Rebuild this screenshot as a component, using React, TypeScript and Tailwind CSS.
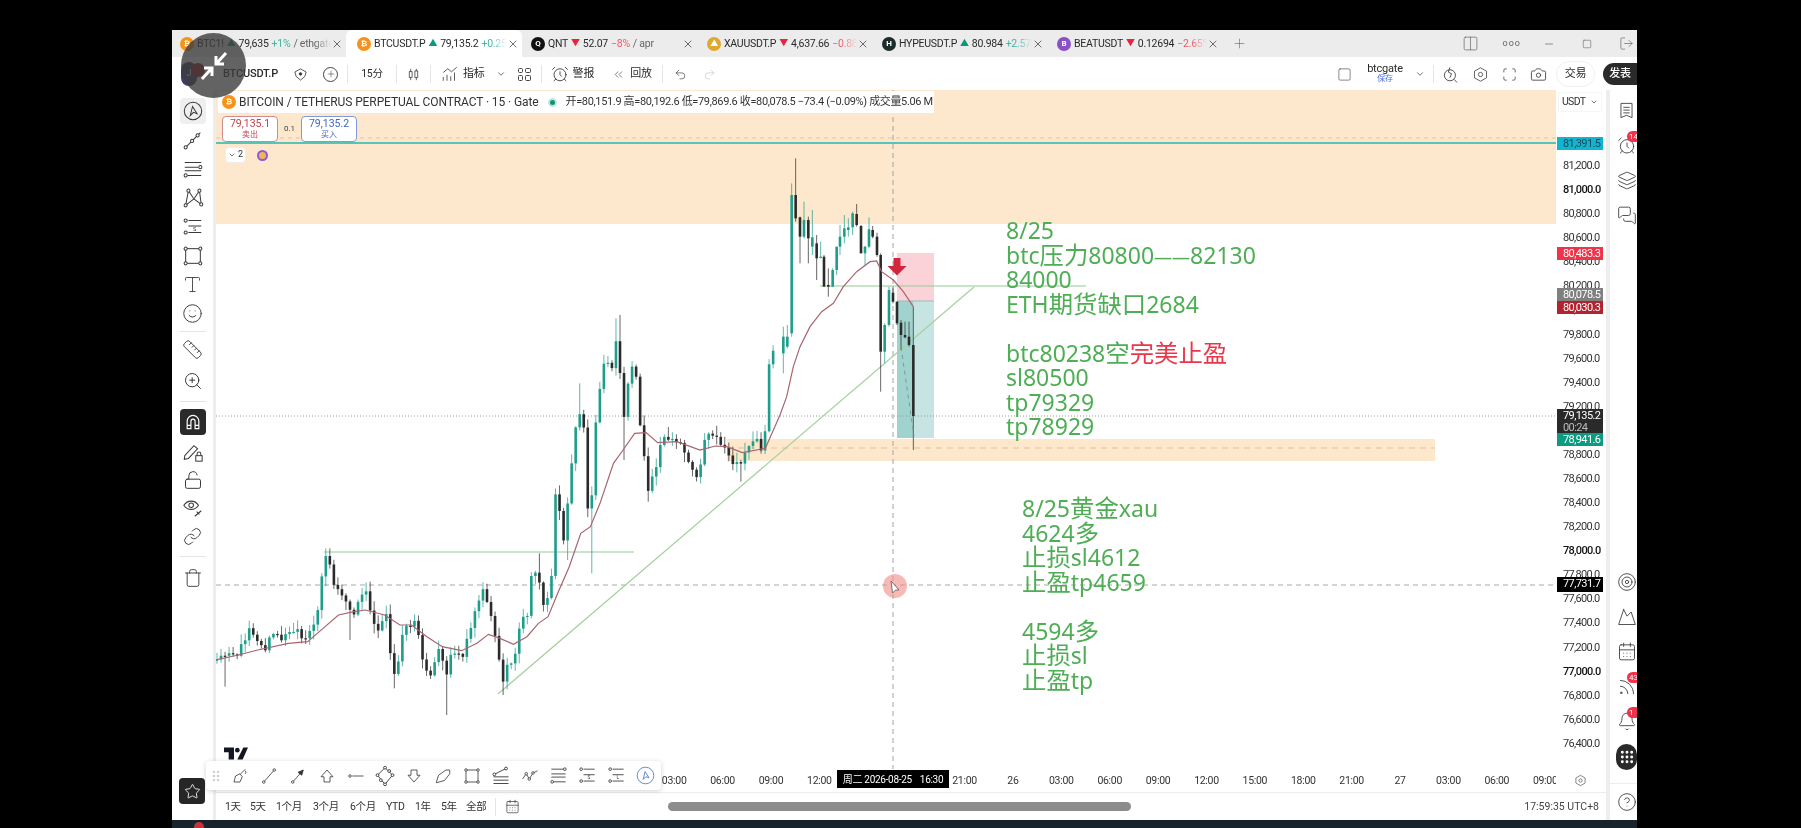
import React from "react";
import { X, Plus, Minus, Smile, ZoomIn, Ruler, LockOpen, Link, Trash, Type, Layers, AlarmClock, MessagesSquare, Mountain, CalendarDays, Rss, Bell, Grip, CircleHelp, Star, Target, ChevronDown, Undo2, Redo2, Camera, Square, LogOut, Columns2, ChevronsLeft } from "lucide-react";

const rnd = (n: number) => { const s = Math.sin(n * 12.9898 + 4.1) * 43758.5453; return s - Math.floor(s); };

const K8: number[][] = [[45,1080],[60,1065],[80,1050],[95,1075],[130,975],[150,1030],[170,1050],[185,1000],[210,1015],[250,990],[270,1030],[295,980],[310,900],[322,770],[332,760],[345,850],[370,885],[395,950],[430,865],[450,960],[470,1000],[480,880],[490,1040],[510,1150],[522,1000],[560,960],[575,1060],[600,1135],[620,1050],[640,1120],[655,1050],[680,1075],[700,990],[735,860],[750,920],[770,1015],[785,1160],[800,1080],[815,1105],[830,980],[855,930],[860,820],[880,830],[895,930],[915,820],[925,565],[945,720],[965,510],[980,350],[992,330],[1000,400],[1010,680],[1020,560],[1030,340],[1045,210],[1060,180],[1072,215],[1085,90],[1100,370],[1115,235],[1130,170],[1145,390],[1165,570],[1185,500],[1200,410],[1225,425],[1250,430],[1270,480],[1285,530],[1300,520],[1305,420],[1330,400],[1360,430],[1380,490],[1405,500],[1420,450],[1450,410],[1465,480],[1475,280],[1482,145],[1495,170],[1510,110],[1525,160],[1540,100]];
const pts = K8.map(([x, y]) => [200 + x / 2.6, 300 + y / 3]);
const interp = (x: number) => {
  for (let i = 1; i < pts.length; i++) {
    if (x <= pts[i][0]) {
      const [a, b] = pts[i - 1]; const [c, d] = pts[i];
      return b + ((x - a) / (c - a)) * (d - b);
    }
  }
  return pts[pts.length - 1][1];
};
type C = { x: number; o: number; c: number; h: number; l: number };
const specials: number[][] = [[68,0,1160],[330,745,0],[395,0,1020],[510,0,1165],[637,0,1245],[785,0,1185],[880,760,0],[955,0,780],[985,250,0],[1018,0,820],[1080,55,0],[1090,45,0],[1100,0,480],[1165,0,605],[1410,0,545]];
const left: C[] = [];
{
  let prev = interp(217);
  for (let i = 0; i < 139; i++) {
    const x = 217 + i * 4.03;
    const close = interp(x) + (rnd(i) - 0.5) * 7;
    let h = Math.min(prev, close) - 1 - rnd(i + 300) * 9;
    let l = Math.max(prev, close) + 1 + rnd(i + 600) * 9;
    for (const [zx, hi, lo] of specials) {
      if (Math.abs(200 + zx / 2.6 - x) <= 2) {
        if (hi) h = 300 + hi / 3;
        if (lo) l = 300 + lo / 3;
      }
    }
    left.push({ x, o: prev, c: close, h, l });
    prev = close;
  }
}
const R: number[][] = [[10,640,590,560,700],[22,620,590,555,625],[35,580,165,130,590],[47,165,235,55,245],[60,232,290,230,370],[72,290,240,185,295],[85,240,295,230,370],[97,320,292,210,345],[110,310,355,285,420],[122,352,350,305,355],[132,350,440,345,440],[145,435,440,385,470],[158,440,390,385,440],[170,390,320,320,405],[180,320,290,255,345],[193,290,265,225,310],[205,270,262,235,290],[218,262,220,215,285],[230,222,255,192,260],[243,258,340,255,340],[255,340,320,318,375],[267,320,268,232,325],[278,270,290,258,295],[291,290,345,278,350],[302,345,635,340,755],[314,635,555,550,670],[327,555,450,440,560],[339,458,485,440,490],[351,485,550,485,555],[363,548,585,540,630],[375,585,592,545,595],[387,590,615,545,620],[400,615,828,500,930]];
const right: C[] = R.map(([x, o, c, h, l]) => ({ x: 780 + x / 3, o: 140 + o / 3, c: 140 + c / 3, h: 140 + h / 3, l: 140 + l / 3 }));
const candles = [...left, ...right];

const E8 = [[40,1080],[100,1065],[150,1050],[230,1030],[280,1025],[320,985],[360,945],[400,935],[430,930],[480,945],[520,975],[550,975],[590,1010],[630,1040],[680,1052],[720,1030],[750,1003],[780,1015],[815,1033],[850,1010],[880,970],[905,950],[930,880],[960,800],[990,700],[1015,680],[1040,610],[1075,490],[1100,450],[1130,400],[1160,398],[1190,428],[1240,425],[1300,450],[1340,438],[1370,440],[1410,458],[1470,445]].map(([x, y]) => [200 + x / 2.6, 300 + y / 3]);
const E5 = [[0,825],[20,770],[40,680],[60,620],[90,560],[125,515],[160,490],[190,440],[230,395],[270,365],[290,363],[305,395],[340,420],[370,455],[400,500]].map(([x, y]) => [780 + x / 3, 140 + y / 3]);
const ema = [...E8, ...E5].map((p) => p.join(",")).join(" ");

const Chart = () => (
  <svg className="absolute inset-0" width={1340} height={679} viewBox="216 90 1340 679">
    <rect x={216} y={90} width={1340} height={134} fill="#fde8cd" />
    <rect x={727} y={439} width={708} height={22} fill="#fde8cb" />
    <line x1={216} x2={1556} y1={138} y2={138} stroke="#e9bfa8" strokeDasharray="4 4" />
    <line x1={216} x2={1556} y1={143} y2={143} stroke="#1fb8ae" strokeWidth={1.5} />
    <line x1={727} x2={1435} y1={448} y2={448} stroke="#d9c4a8" strokeDasharray="6 5" />
    <rect x={897} y={253} width={37} height={48} fill="#fbd2d8" />
    <rect x={897} y={301} width={37} height={137} fill="#c6e5e2" />
    <rect x={897} y={301} width={16} height={137} fill="#a0d3cd" />
    <line x1={897} x2={934} y1={301} y2={301} stroke="#9fb9b5" />
    <line x1={216} x2={1556} y1={416} y2={416} stroke="#9a9a9a" strokeDasharray="1 2" />
    <line x1={216} x2={1556} y1={585} y2={585} stroke="#a8a8a8" strokeDasharray="5 4" />
    <line x1={893} x2={893} y1={90} y2={769} stroke="#a3a3a3" strokeDasharray="5 4" />
    <line x1={324} x2={634} y1={552} y2={552} stroke="#93cc93" strokeWidth={1.2} />
    <line x1={820} x2={1086} y1={286} y2={286} stroke="#93cc93" strokeWidth={1.2} />
    <line x1={498} x2={974} y1={694} y2={287} stroke="#a5cf9f" strokeWidth={1.2} />
    {candles.map((k, i) => {
      const up = k.c < k.o;
      const col = up ? "#1f9d8b" : "#2b2b2b";
      const top = Math.min(k.o, k.c);
      const hgt = Math.max(1.2, Math.abs(k.o - k.c));
      return (
        <g key={i}>
          <line x1={k.x} x2={k.x} y1={k.h} y2={k.l} stroke={col} strokeWidth={0.9} opacity={0.8} />
          <rect x={k.x - 1.3} y={top} width={2.6} height={hgt} fill={col} />
        </g>
      );
    })}
    <polyline points={ema} fill="none" stroke="#a8646f" strokeWidth={1.2} />
    <line x1={901} x2={914} y1={347} y2={436} stroke="#7d9a97" strokeDasharray="4 4" />
    <path d="M893.5 258h7v8h6l-9.500 9.500-9.500-9.500h6z" fill="#d1263b" />
    <circle cx={895} cy={586} r={12} fill="#f08a84" opacity={0.6} />
    <path d="M891 581l1.500 12 3-3 3.500 0z" fill="#fff" stroke="#555" strokeWidth={0.8} />
  </svg>
);

const Lines = ({ lines, className }: { lines: React.ReactNode[]; className: string }) => (
  <div className={`absolute text-[23px] leading-[24.5px] text-[#4fae55] font-['Noto_Sans','Noto_Sans_CJK_SC',sans-serif] whitespace-pre ${className}`}>
    {lines.map((l, i) => <div key={i} className="h-[24.5px]">{l}</div>)}
  </div>
);
const Z = ({ children }: { children: React.ReactNode }) => <span className="text-[24.4px]">{children}</span>;

const Ico = ({ children, s = 22, c = "text-[#3a3a3a]", w = 1.1 }: { children: React.ReactNode; s?: number; c?: string; w?: number }) => (
  <svg width={s} height={s} viewBox="0 0 24 24" fill="none" stroke="currentColor" strokeWidth={w} className={`shrink-0 ${c}`}>{children}</svg>
);
const dot = (x: number, y: number, r = 1.7) => <circle cx={x} cy={y} r={r} fill="#fff" />;
const Gear = ({ s = 17 }: { s?: number }) => <Ico s={s}><path d="M12 2.500l8.500 4.800v9.400L12 21.500l-8.500-4.800V7.300z" /><circle cx="12" cy="12" r="3" /></Ico>;

const leftTools: { el: React.ReactNode; active?: boolean }[] = [
  { active: true, el: <Ico><circle cx="12" cy="12" r="9.500" /><path d="M9 17l2.500-10 5 8-4-1.500z" /></Ico> },
  { el: <Ico><path d="M4 20L20 4" />{dot(4, 20)}{dot(11, 13)}{dot(17, 7)}</Ico> },
  { el: <Ico><path d="M3 5h18M3 10h15M6 19h15M3 14h18" />{dot(20, 10)}{dot(4, 19)}</Ico> },
  { el: <Ico><path d="M4 20L7 4l6 9 6-9 2 15-8-6-9 7z" />{dot(4, 20)}{dot(7, 4)}{dot(19, 4)}{dot(21, 19)}</Ico> },
  { el: <Ico><path d="M7 5h14M7 11h14M7 18h14" />{dot(4, 5)}{dot(4, 18)}<text x="12" y="16.500" fontSize="6" stroke="none" fill="currentColor">S</text></Ico> },
  { el: <Ico><rect x="4" y="4" width="16" height="16" />{dot(4, 4)}{dot(20, 4)}{dot(4, 20)}{dot(20, 20)}</Ico> },
  { el: <Type size={21} strokeWidth={1} className="text-[#3a3a3a]" /> },
  { el: <Smile size={21} strokeWidth={1.1} className="text-[#3a3a3a]" /> },
];
const Tool = ({ active, dark, children, h = 29 }: { active?: boolean; dark?: boolean; children: React.ReactNode; h?: number }) => (
  <div className="w-full flex items-center justify-center" style={{ height: h }}>
    <div className={`w-[26px] h-[26px] rounded flex items-center justify-center ${active ? "bg-[#efefef]" : ""} ${dark ? "bg-[#2a2a2a]" : ""}`}>{children}</div>
  </div>
);

const LeftBar = () => (
  <div className="w-[44px] shrink-0 border-r-[3px] border-[#ededed] flex flex-col pt-[6px] px-[7px] items-center">
    {leftTools.map((t, i) => <Tool key={i} active={t.active}>{t.el}</Tool>)}
    <div className="w-[26px] border-t border-[#e5e5e5] my-[3px]" />
    <Tool><Ruler size={21} strokeWidth={1.1} className="text-[#3a3a3a]" /></Tool>
    <Tool h={33}><ZoomIn size={20} strokeWidth={1.2} className="text-[#3a3a3a]" /></Tool>
    <div className="w-[26px] border-t border-[#e5e5e5] my-[4px]" />
    <Tool dark h={32}><Ico c="text-white" s={20} w={1.4}><path d="M5 20V11a7 7 0 0 1 14 0v9h-4.500v-9a2.500 2.500 0 0 0-5 0v9zM5 16h4.500M14.500 16H19" /></Ico></Tool>
    <Tool h={28}><Ico><path d="M3 16L13 5l4 3.500L7 19l-4.500 1z" /><rect x="15" y="16" width="7" height="6" /><path d="M16.500 16v-2a2 2 0 0 1 4 0v2" /></Ico></Tool>
    <Tool h={28}><LockOpen size={20} strokeWidth={1.2} className="text-[#3a3a3a]" /></Tool>
    <Tool h={28}><Ico><path d="M2 9c4-6 12-6 16 0-4 6-12 6-16 0z" /><circle cx="10" cy="9" r="2.500" /><path d="M14 21l7-6M16 16l3 3" /></Ico></Tool>
    <Tool h={28}><Link size={19} strokeWidth={1.2} className="text-[#3a3a3a]" /></Tool>
    <div className="w-[26px] border-t border-[#e5e5e5] my-[6px]" />
    <Tool><Trash size={20} strokeWidth={1.1} className="text-[#3a3a3a]" /></Tool>
  </div>
);

const Coin = ({ bg, t }: { bg: string; t: string }) => (
  <span className={`w-[14px] h-[14px] shrink-0 rounded-full ${bg} text-white text-[8px] font-bold flex items-center justify-center`}>{t}</span>
);
const TabItem = ({ coin, name, up, price, pct, rest, active, w, pl }: { coin: React.ReactNode; name: string; up: boolean; price: string; pct: string; rest?: string; active?: boolean; w: string; pl: string }) => (
  <div className={`${w} ${pl} h-full shrink-0 flex items-center pr-[3px] rounded-t-md ${active ? "bg-white" : ""} text-[10.5px] tracking-[-0.25px] text-[#2a2a2a]`}>
    {coin}
    <div className="flex-1 min-w-0 flex items-center gap-[3px] ml-[3px] overflow-hidden whitespace-nowrap [mask-image:linear-gradient(to_right,black_88%,transparent)]">
      <span>{name}</span>
      <span className={`text-[9px] ${up ? "text-[#089981]" : "text-[#e8243c]"}`}>{up ? "▲" : "▼"}</span>
      <span>{price}</span>
      <span className={up ? "text-[#3fb6a5]" : "text-[#ee5a6a]"}>{pct}</span>
      {rest && <span className="text-[#666]">{rest}</span>}
    </div>
    <X size={12} strokeWidth={1.4} className="shrink-0 text-[#333]" />
  </div>
);

const Tabs = () => (
  <div className="h-[27px] bg-[#ececec] flex items-center shrink-0">
    <TabItem w="w-[174px]" pl="pl-[8px]" coin={<Coin bg="bg-[#f7931a]" t="₿" />} name="BTC1!" up price="79,635" pct="+1%" rest="/ ethgate" />
    <TabItem w="w-[176px]" pl="pl-[11px]" active coin={<Coin bg="bg-[#f7931a]" t="₿" />} name="BTCUSDT.P" up price="79,135.2" pct="+0.25%" />
    <TabItem w="w-[175px]" pl="pl-[9px]" coin={<Coin bg="bg-[#111]" t="Q" />} name="QNT" up={false} price="52.07" pct="−8%" rest="/ apr" />
    <TabItem w="w-[175px]" pl="pl-[10px]" coin={<Coin bg="bg-[#e0a82e]" t="▲" />} name="XAUUSDT.P" up={false} price="4,637.66" pct="−0.88%" />
    <TabItem w="w-[175px]" pl="pl-[10px]" coin={<Coin bg="bg-[#1c2b2b]" t="H" />} name="HYPEUSDT.P" up price="80.984" pct="+2.57%" />
    <TabItem w="w-[175px]" pl="pl-[10px]" coin={<Coin bg="bg-[#8b4fc8]" t="B" />} name="BEATUSDT" up={false} price="0.12694" pct="−2.65%" />
    <Plus size={15} strokeWidth={1} className="ml-[10px] text-[#666]" />
    <div className="ml-auto flex items-center text-[#666]">
      <Columns2 size={17} strokeWidth={1} className="mr-[24px]" />
      <span className="text-[9px] tracking-[1px] mr-[22px]">ooo</span>
      <Minus size={12} strokeWidth={1.4} className="mr-[27px]" />
      <Square size={10} strokeWidth={1.4} className="mr-[27px]" />
      <LogOut size={15} strokeWidth={1.1} className="mr-[3px]" />
    </div>
  </div>
);

const Sep = () => <div className="w-px h-[18px] bg-[#e5e5e5] shrink-0" />;
const TopBar = () => (
  <div className="h-[33px] pt-[3px] pb-[2px] bg-white flex items-center shrink-0 text-[10.5px] text-[#2a2a2a] tracking-[-0.2px] relative">
    <div className="w-[9px]" />
    <div className="w-[16px] h-[24px] rounded-full bg-[#3c3c6c] text-white text-[9px] flex items-center justify-center">J</div>
    <div className="w-[14px] h-[14px] rounded-full bg-[#a01c2c] -ml-[6px] -mt-[8px]" />
    <div className="w-[134px] pl-[3px] flex items-center">
      <span className="font-medium text-[11px] ml-[15px]">BTCUSDT.P</span>
      <Ico s={15} w={1.3} c="ml-[15px] text-[#333]"><path d="M12 3l9 5-2 7-7 6-7-6-2-7z" /><circle cx="12" cy="11" r="2" fill="currentColor" /></Ico>
      <div className="ml-[15px] w-[15px] h-[15px] rounded-full border border-[#444] flex items-center justify-center"><Plus size={10} strokeWidth={1.2} /></div>
    </div>
    <div className="w-[8px]" />
    <Sep />
    <span className="mx-[12px] w-[24px] text-center whitespace-nowrap">15分</span>
    <Sep />
    <div className="ml-[8px] mr-[8px]"><Ico s={17}><path d="M8 4v16M16 4v16" /><rect x="6" y="8" width="4" height="8" fill="#fff" /><rect x="14" y="7" width="4" height="9" fill="#fff" /></Ico></div>
    <Sep />
    <div className="ml-[10px] flex items-center">
      <Ico s={18}><path d="M3 21v-5M8 21v-8M13 21v-6M18 21V10M3 10l6-5 5 4 7-6" /></Ico>
      <span className="ml-[4px] text-[11px]">指标</span>
      <ChevronDown size={10} className="ml-[11px] text-[#555]" />
    </div>
    <div className="ml-[12px] grid grid-cols-2 gap-[2px]">
      {[0, 1, 2, 3].map((i) => <span key={i} className="w-[5.500px] h-[5.500px] rounded-[1.500px] border border-[#444]" />)}
    </div>
    <div className="ml-[10px]"><Sep /></div>
    <div className="ml-[9px] flex items-center">
      <AlarmClock size={18} strokeWidth={1.1} />
      <span className="ml-[4px] text-[11px]">警报</span>
    </div>
    <ChevronsLeft size={13} strokeWidth={1.1} className="ml-[18px]" />
    <span className="ml-[5px] text-[11px]">回放</span>
    <div className="ml-[10px]"><Sep /></div>
    <Undo2 size={13} strokeWidth={1.1} className="ml-[11px]" />
    <Redo2 size={13} strokeWidth={1} className="ml-[16px] text-[#bbb]" />
    <div className="ml-auto flex items-center">
      <Square size={15} strokeWidth={1} className="text-[#444]" />
      <div className="ml-[13px] w-[40px] flex flex-col items-center leading-[10px]">
        <span className="text-[11px]">btcgate</span>
        <span className="text-[8px] text-[#4a72d8]">保存</span>
      </div>
      <ChevronDown size={10} className="ml-[10px] text-[#555]" />
      <div className="ml-[8px]"><Sep /></div>
      <div className="ml-[8px]"><Ico s={19}><circle cx="10" cy="13" r="7" /><path d="M15 18l4 4M10 3l-2 6 4 2-2 5" /></Ico></div>
      <div className="ml-[11px]"><Gear /></div>
      <div className="ml-[12px]"><Ico s={17}><path d="M4 9V6a2 2 0 0 1 2-2h2M16 4h2a2 2 0 0 1 2 2v3M20 15v3a2 2 0 0 1-2 2h-2M8 20H6a2 2 0 0 1-2-2v-3" /></Ico></div>
      <Camera size={17} strokeWidth={1.1} className="ml-[12px]" />
      <div className="ml-[9px] w-[39px] h-[26px] rounded-full border border-[#f0f0f0] flex items-center justify-center text-[11px]">交易</div>
      <div className="ml-[8px] w-[34px] h-[22px] rounded-l-full bg-[#2a2a2a] text-white flex items-center justify-center text-[11px] font-medium">发表</div>
    </div>
  </div>
);

const prices = ["81,200.0","81,000.0","80,800.0","80,600.0","80,400.0","80,200.0","80,000.0","79,800.0","79,600.0","79,400.0","79,200.0","79,000.0","78,800.0","78,600.0","78,400.0","78,200.0","78,000.0","77,800.0","77,600.0","77,400.0","77,200.0","77,000.0","76,800.0","76,600.0","76,400.0"];
const Tag = ({ bg, fg = "text-white", top, children, h = 13 }: { bg: string; fg?: string; top: number; children: React.ReactNode; h?: number }) => (
  <div className={`absolute left-[1px] w-[46px] ${bg} ${fg} pl-[6px] leading-[13px] text-[11px] tracking-[-0.6px]`} style={{ top, height: h }}>{children}</div>
);
const Axis = () => (
  <div className="w-[50px] shrink-0 relative bg-white text-[11px] tracking-[-0.7px] text-[#333] overflow-hidden">
    <div className="absolute left-[2px] top-[2px] w-[44px] h-[20px] border border-[#f5f5f5] flex items-center pl-[3px] text-[10.5px]">USDT<ChevronDown size={8} className="ml-[5px]" /></div>
    <div className="pt-[64px] pl-[7px]">
      {prices.map((p) => (
        <div key={p} className={`h-[24.080px] leading-[24px] ${p === "81,000.0" || p === "78,000.0" || p === "77,000.0" ? "text-[#111] font-medium" : ""}`}>{p}</div>
      ))}
    </div>
    <Tag bg="bg-[#12b5d0]" fg="text-[#17495a]" top={47}>81,391.5</Tag>
    <Tag bg="bg-[#f03349]" top={157}>80,483.3</Tag>
    <Tag bg="bg-[#808080]" top={198}>80,078.5</Tag>
    <Tag bg="bg-[#b2232f]" top={211}>80,030.3</Tag>
    <Tag bg="bg-[#2a2a2a]" top={319} h={24}>79,135.2<div className="text-[#bbb] leading-[11px]">00:24</div></Tag>
    <Tag bg="bg-[#0a9b80]" top={343}>78,941.6</Tag>
    <Tag bg="bg-black" top={487} h={15}>77,731.7</Tag>
  </div>
);

const times = ["03:00","06:00","09:00","12:00","15:00","18:00","21:00","26","03:00","06:00","09:00","12:00","15:00","18:00","21:00","27","03:00","06:00","09:00"];
const TimeAxis = () => (
  <div className="h-[23px] shrink-0 flex bg-white text-[10.5px] tracking-[-0.3px] text-[#333] relative">
    <div className="w-[1340px] overflow-hidden flex items-center pl-[434px]">
      {times.map((t, i) => <div key={i} className="w-[48.400px] shrink-0 text-center">{t}</div>)}
    </div>
    <div className="flex-1 flex items-center pl-[18px]"><Gear s={13} /></div>
    <div className="absolute left-[621px] top-[1px] w-[112px] h-[18px] bg-black text-white flex items-center justify-center text-[10px] gap-[5px] whitespace-pre">周二 2026-08-25<span className="ml-[3px]">16:30</span></div>
  </div>
);

const ranges: [string, string][] = [["1天","w-[25px]"],["5天","w-[26px]"],["1个月","w-[37px]"],["3个月","w-[37px]"],["6个月","w-[36px]"],["YTD","w-[29px]"],["1年","w-[26px]"],["5年","w-[25px]"],["全部","w-[27px]"]];
const BottomBar = () => (
  <div className="h-[28px] border-t border-[#eeeeee] flex items-center pl-[9px] text-[10.5px] tracking-[-0.3px] text-[#333] shrink-0">
    {ranges.map(([r, w]) => <div key={r} className={w}>{r}</div>)}
    <div className="w-px h-[18px] bg-[#e5e5e5] ml-[2px]" />
    <CalendarDays size={15} strokeWidth={1.1} className="ml-[9px]" />
    <div className="ml-[148px] w-[463px] h-[9px] rounded-full bg-[#8c8c8c]" />
    <div className="ml-auto pr-[7px] text-[10.5px] text-[#444] tracking-[0]">17:59:35 UTC+8</div>
  </div>
);

const Side = ({ children, badge, h = 35 }: { children: React.ReactNode; badge?: string; h?: number }) => (
  <div className="relative flex items-center pl-[7px]" style={{ height: h }}>
    {children}
    {badge && <span className="absolute left-[17px] top-[3px] min-w-[14px] h-[11px] rounded-full bg-[#f0334a] text-white text-[8px] leading-[11px] pl-[2px]">{badge}</span>}
  </div>
);
const RightBar = () => (
  <div className="w-[31px] shrink-0 border-l-[4px] border-[#ededed] flex flex-col overflow-hidden bg-white text-[#444]">
    <div className="pt-[3px]">
      <Side><Ico s={19}><path d="M5 3h14v18l-7-3-7 3zM8 8h8M8 11.500h8M8 15h8" /></Ico></Side>
      <Side badge="14"><AlarmClock size={21} strokeWidth={1.1} /></Side>
      <Side><Layers size={21} strokeWidth={1.1} /></Side>
      <Side><MessagesSquare size={21} strokeWidth={1.1} /></Side>
    </div>
    <div className="mt-auto">
      <Side><Target size={22} strokeWidth={1.1} /></Side>
      <Side><Mountain size={22} strokeWidth={1.1} /></Side>
      <Side><CalendarDays size={21} strokeWidth={1.1} /></Side>
      <Side badge="43"><Rss size={20} strokeWidth={1.1} /></Side>
      <Side badge="1"><Bell size={21} strokeWidth={1.1} /></Side>
      <Side><div className="w-[26px] h-[26px] -ml-[1px] rounded-full bg-[#2a2a2a] text-white flex items-center justify-center"><Grip size={16} strokeWidth={2.4} /></div></Side>
      <div className="border-t border-[#eeeeee] mt-[9px]">
        <Side h={36}><CircleHelp size={22} strokeWidth={1.1} /></Side>
      </div>
    </div>
  </div>
);

const floatIcons: React.ReactNode[] = [
  <Ico s={18}><path d="M4 20l2-8 6-3 3 4-3 7zM13 9l6-6M19 9a3 3 0 0 0 0-4" /></Ico>,
  <Ico s={18}><path d="M5 20L19 4" />{dot(5, 20)}{dot(19, 4)}</Ico>,
  <Ico s={18}><path d="M5 20L19 4" />{dot(5, 20)}<path d="M19 4l-2 7-5-4z" fill="#333" /></Ico>,
  <Ico s={18}><path d="M12 4l8 9h-4v7H8v-7H4z" /></Ico>,
  <Ico s={18}><path d="M7 12h15" />{dot(4, 12)}</Ico>,
  <Ico s={20}><path d="M12 2l9 9-9 11-9-11z" />{dot(12, 2)}{dot(21, 11)}{dot(12, 22)}{dot(3, 11)}{dot(7, 17)}{dot(17, 6)}</Ico>,
  <Ico s={18}><path d="M12 20l8-9h-4V4H8v7H4z" /></Ico>,
  <Ico s={18}><path d="M3 21l3-10L16 4h5v5l-7 9z" /></Ico>,
  <Ico s={18}><rect x="4" y="4" width="16" height="16" />{dot(4, 4)}{dot(20, 4)}{dot(4, 20)}{dot(20, 20)}</Ico>,
  <Ico s={20}><path d="M3 21h18M3 17h18M3 13h18M4 10L18 3" />{dot(4, 10)}{dot(18, 3)}</Ico>,
  <Ico s={18}><path d="M2 16l5-7 4 7 5-8 6-3" />{dot(7, 9)}{dot(11, 16)}{dot(16, 8)}</Ico>,
  <Ico s={19}><path d="M3 4h18M3 10h18M3 14h18M3 20h18" />{dot(20, 4)}{dot(4, 20)}</Ico>,
  <Ico s={19}><path d="M7 4h14M7 11h14M7 19h14" />{dot(4, 4)}{dot(4, 19)}<text x="12" y="17" fontSize="6" stroke="none" fill="currentColor">S</text></Ico>,
  <Ico s={19}><path d="M7 4h14M7 11h14M7 19h14" />{dot(4, 4)}{dot(4, 19)}<text x="12" y="17" fontSize="6" stroke="none" fill="currentColor">L</text></Ico>,
  <Ico s={19} c="text-[#4f78d8]"><circle cx="12" cy="12" r="10.500" /><path d="M9 17l2.500-10 5 8-4-1.500z" /></Ico>,
];
const FloatBar = () => (
  <div className="absolute left-[34px] top-[671px] w-[455px] h-[29px] rounded bg-white shadow-[0_1px_5px_rgba(0,0,0,0.18)] flex items-center">
    <div className="w-[19px] flex justify-center"><div className="grid grid-cols-2 gap-[2px]">{[0,1,2,3,4,5].map((i) => <span key={i} className="w-[2px] h-[2px] bg-[#ccc]" />)}</div></div>
    {floatIcons.map((ic, i) => <div key={i} className="w-[29px] flex justify-center items-center">{ic}</div>)}
  </div>
);

export default function App() {
  return (
    <div className="relative w-[1801px] h-[828px] bg-black overflow-hidden pt-[30px] pl-[172px] font-['Roboto','Noto_Sans_CJK_SC',sans-serif] blur-[0.4px]">
      <div className="w-[1465px] h-[790px] bg-white flex flex-col overflow-hidden">
        <Tabs />
        <TopBar />
        <div className="relative flex-1 flex min-h-0">
          <LeftBar />
          <div className="w-[1390px] flex flex-col">
            <div className="h-[679px] flex">
              <div className="relative w-[1340px] h-[679px] overflow-hidden">
                <Chart />
                <div className="absolute left-[2px] top-[1px] h-[22px] w-[716px] bg-white flex items-center text-[12px] tracking-[-0.1px] text-[#333] whitespace-nowrap">
                  <span className="ml-[4px] mr-[3px]"><Coin bg="bg-[#f7931a]" t="₿" /></span>
                  <span>BITCOIN / TETHERUS PERPETUAL CONTRACT · 15 · Gate</span>
                  <span className="ml-[9px] shrink-0 w-[9px] h-[9px] rounded-full border-[2px] border-[#bfe6df] bg-[#0f8f7c]" />
                  <span className="ml-[9px] text-[11px] tracking-[-0.35px]">开=80,151.9 高=80,192.6 低=79,869.6 收=80,078.5 −73.4 (−0.09%) 成交量5.06 M</span>
                </div>
                <div className="absolute left-[6px] top-[26px] flex items-center">
                  <div className="w-[56px] h-[26px] rounded border border-[#d08a92] bg-white flex flex-col items-center justify-center text-[#c2414f] text-[10.5px] leading-[12px]"><span>79,135.1</span><span className="text-[8px] leading-[10px]">卖出</span></div>
                  <span className="w-[23px] text-center text-[8px] text-[#444]">0.1</span>
                  <div className="w-[56px] h-[26px] rounded border border-[#7c9be0] bg-white flex flex-col items-center justify-center text-[#3f67c8] text-[10.5px] leading-[12px]"><span>79,135.2</span><span className="text-[8px] leading-[10px]">买入</span></div>
                </div>
                <div className="absolute left-[9px] top-[57px] flex items-center gap-[11px]">
                  <div className="w-[21px] h-[16px] bg-white border border-[#eee] rounded flex items-center justify-center gap-[2px] text-[9px] text-[#333]"><ChevronDown size={8} />2</div>
                  <div className="w-[11px] h-[11px] rounded-full border-[2px] border-[#8b5bd0] bg-[#f2b45a]" />
                </div>
                <Lines className="left-[790px] top-[128px]" lines={["8/25", <>btc<Z>压力</Z>80800<span className="text-[18px]">——</span>82130</>, "84000", <>ETH<Z>期货缺口</Z>2684</>, " ", <>btc80238<Z>空</Z><Z><span className="text-[#e8374a]">完美止盈</span></Z></>, "sl80500", "tp79329", "tp78929"]} />
                <Lines className="left-[806px] top-[406px]" lines={[<>8/25<Z>黄金</Z>xau</>, <>4624<Z>多</Z></>, <><Z>止损</Z>sl4612</>, <><Z>止盈</Z>tp4659</>, " ", <>4594<Z>多</Z></>, <><Z>止损</Z>sl</>, <><Z>止盈</Z>tp</>]} />
                <svg className="absolute left-[8px] top-[657px]" width="24" height="13" viewBox="0 0 36 18"><path d="M0 0h15v18H7V7H0zM29 0h7l-8 18h-8z" fill="#131722" /><circle cx="20" cy="4" r="3.500" fill="#131722" /></svg>
              </div>
              <Axis />
            </div>
            <TimeAxis />
            <BottomBar />
          </div>
          <RightBar />
          <FloatBar />
          <div className="absolute left-[7px] top-[688px] w-[26px] h-[26px] rounded bg-[#262626] flex items-center justify-center"><Star size={17} strokeWidth={1.2} className="text-white" /></div>
        </div>
      </div>
      <div className="w-[1465px] h-[8px] bg-[#18242c] relative"><div className="absolute left-[22px] top-[2px] w-[10px] h-[10px] rounded-full bg-[#c9343c]" /></div>
      <div className="absolute left-[181px] top-[33px] w-[65px] h-[65px] rounded-full bg-[#3c3c3c]/80 flex items-center justify-center">
        <svg width="34" height="34" viewBox="0 0 34 34" fill="none" stroke="#fff" strokeWidth="3"><path d="M29 4L19 15M19 7v8h8M5 30l10-11M15 27v-8H7" /></svg>
      </div>
    </div>
  );
}
